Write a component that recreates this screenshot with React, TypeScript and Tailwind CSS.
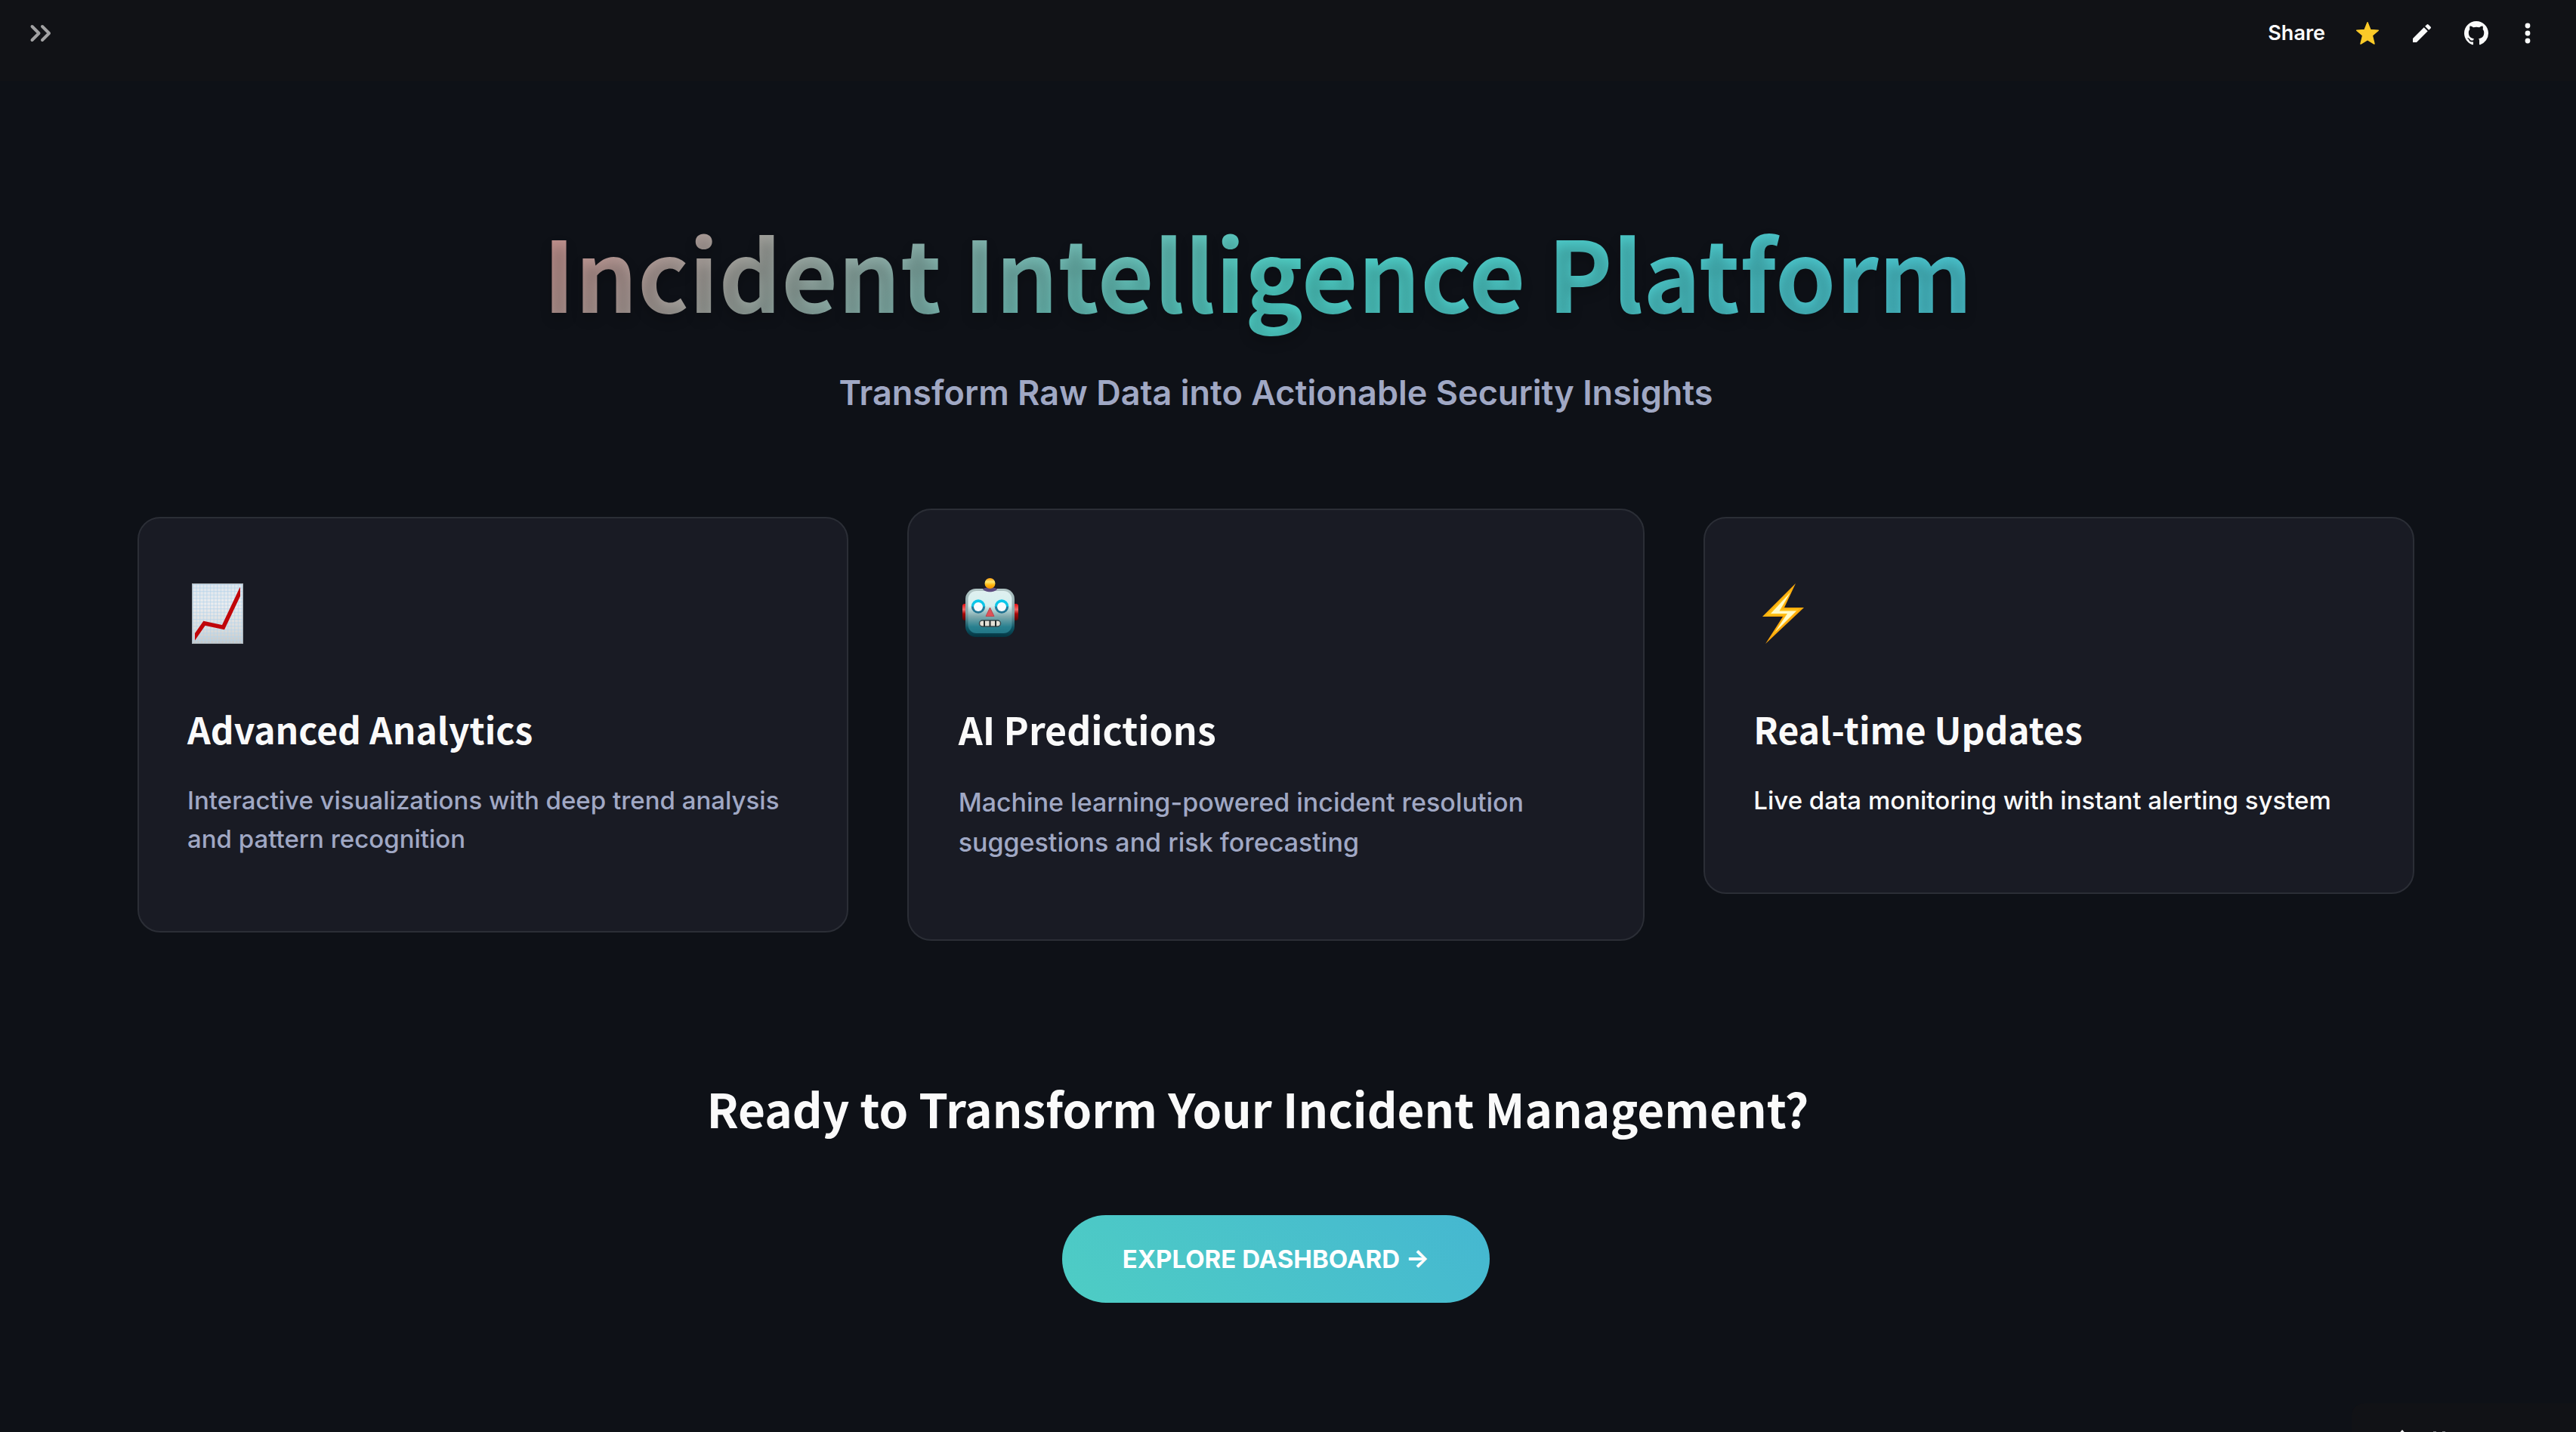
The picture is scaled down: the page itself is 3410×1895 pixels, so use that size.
import React from "react";

const heading = "font-['Noto_Sans_CJK_SC',sans-serif] font-bold text-[#fafafa]";

function ChartIcon() {
  return (
    <svg viewBox="0 0 68 80" className="mt-[22px] ml-[6px] h-20 w-[68px]" aria-hidden="true">
      <defs>
        <linearGradient id="paper" x1="0" y1="0" x2="0" y2="1">
          <stop offset="0" stopColor="#dfe6ec" />
          <stop offset="0.35" stopColor="#ecedef" />
          <stop offset="0.75" stopColor="#dddddb" />
          <stop offset="1" stopColor="#c3c8ca" />
        </linearGradient>
        <pattern id="squares" width="4.6" height="4.6" patternUnits="userSpaceOnUse">
          <path d="M0 1.6H4.6M1.6 0V4.6" stroke="#b5d3ea" strokeWidth="0.8" fill="none" />
        </pattern>
        <clipPath id="plot">
          <rect x="4" y="0" width="60" height="80" />
        </clipPath>
      </defs>
      <rect width="68" height="80" fill="url(#paper)" />
      <rect width="68" height="80" fill="url(#squares)" />
      <rect x="0.5" y="0.5" width="67" height="79" fill="none" stroke="#a9b0b5" strokeWidth="1" />
      <path
        d="M1 75L16.500 52.800L41.500 58.200L66 6.500"
        clipPath="url(#plot)"
        fill="none"
        stroke="#c00509"
        strokeWidth="5.400"
        strokeLinejoin="miter"
      />
    </svg>
  );
}

function RobotIcon() {
  return (
    <svg viewBox="0 0 74 78" className="mt-6 ml-[5px] h-[78px] w-[74px]" aria-hidden="true">
      <defs>
        <linearGradient id="face" x1="0" y1="0" x2="0" y2="1">
          <stop offset="0" stopColor="#dff0f0" />
          <stop offset="0.35" stopColor="#d5efee" />
          <stop offset="0.6" stopColor="#7fa9ad" />
          <stop offset="0.85" stopColor="#28808f" />
          <stop offset="1" stopColor="#227686" />
        </linearGradient>
        <linearGradient id="shell" x1="0" y1="0" x2="0" y2="1">
          <stop offset="0" stopColor="#b3c6c6" />
          <stop offset="0.5" stopColor="#83a3a7" />
          <stop offset="0.8" stopColor="#0e5867" />
          <stop offset="1" stopColor="#043340" />
        </linearGradient>
        <linearGradient id="ear" x1="0" y1="0" x2="0" y2="1">
          <stop offset="0" stopColor="#e80c10" />
          <stop offset="0.35" stopColor="#f06a68" />
          <stop offset="0.6" stopColor="#a80808" />
          <stop offset="1" stopColor="#5a0505" />
        </linearGradient>
        <linearGradient id="bulb" x1="0" y1="0" x2="0" y2="1">
          <stop offset="0" stopColor="#ff9d0a" />
          <stop offset="0.35" stopColor="#ffe873" />
          <stop offset="0.65" stopColor="#ffb60c" />
          <stop offset="1" stopColor="#f08a05" />
        </linearGradient>
        <linearGradient id="eye" x1="0" y1="0" x2="0" y2="1">
          <stop offset="0" stopColor="#05c9ee" />
          <stop offset="0.48" stopColor="#12c4e4" />
          <stop offset="0.55" stopColor="#1f7fa0" />
          <stop offset="1" stopColor="#23708e" />
        </linearGradient>
      </defs>
      <rect x="0" y="34" width="8" height="22" rx="3" fill="url(#ear)" />
      <rect x="66" y="34" width="8" height="22" rx="3" fill="url(#ear)" />
      <rect x="4" y="14" width="65" height="64" rx="14" fill="url(#shell)" />
      <rect x="7.500" y="17" width="58" height="56" rx="11" fill="url(#face)" />
      <path d="M27 14.500C31 11 42 11 46 14.500C43 19.500 30 19.500 27 14.500Z" fill="#5b4a7d" />
      <circle cx="36.500" cy="7" r="7" fill="url(#bulb)" />
      <circle cx="21" cy="37.500" r="9.200" fill="url(#eye)" />
      <circle cx="21" cy="38" r="6" fill="#f8fbfd" />
      <circle cx="52" cy="37.500" r="9.200" fill="url(#eye)" />
      <circle cx="52" cy="38" r="6" fill="#f8fbfd" />
      <path d="M36.500 39L42 50.500H31Z" fill="#dd5258" stroke="#b9474e" strokeWidth="1" strokeLinejoin="round" />
      <rect x="22.500" y="56" width="28" height="8" rx="4" fill="#e3e0d6" stroke="#3a4a4d" strokeWidth="1.500" />
      <path d="M29 56V64M36.500 56V64M44 56V64" stroke="#222b2c" strokeWidth="2" />
    </svg>
  );
}

function BoltIcon() {
  return (
    <svg viewBox="0 0 56 80" className="mt-[22px] ml-[12px] h-20 w-14" aria-hidden="true">
      <defs>
        <linearGradient id="bolt" x1="0" y1="0" x2="1" y2="1">
          <stop offset="0" stopColor="#ffc412" />
          <stop offset="0.5" stopColor="#fca50a" />
          <stop offset="1" stopColor="#ffb20d" />
        </linearGradient>
      </defs>
      <path d="M44 0L0 44H27L4 80L55 32H29Z" fill="url(#bolt)" />
      <path d="M39 8L5 42.500H30L12 70L49 33.500H26Z" fill="#ffcb1c" opacity="0.7" />
      <path d="M37 12L11 40H33L17 64L45 36.500H22.500Z" fill="#fffbc9" />
    </svg>
  );
}

function Toolbar() {
  return (
    <header className="h-[107px] bg-[#111216]">
      <div className="flex h-[88px] items-center justify-between pr-[52px] pl-[38px]">
        <button type="button" aria-label="Open sidebar" className="text-[#a2a2a3]">
          <svg viewBox="0 0 32 32" className="size-8" fill="none" stroke="currentColor" strokeWidth="4" strokeLinecap="round" strokeLinejoin="round">
            <path d="M4.500 7L13.500 16L4.500 25M18 7L27 16L18 25" />
          </svg>
        </button>
        <div className="flex items-center gap-10 text-[#fafafa]">
          <button type="button" className="text-[27px] leading-8 font-semibold">Share</button>
          <button type="button" aria-label="Favorite">
            <svg viewBox="0 0 32 32" className="size-8 text-[#fbca28]" fill="currentColor" stroke="currentColor" strokeWidth="1.500" strokeLinejoin="round">
              <path d="M16 1.800L19.900 11.600L30.300 12.300L22.300 19L25 30L16 24.600L7 30L9.700 19L1.700 12.300L12.100 11.600Z" />
            </svg>
          </button>
          <button type="button" aria-label="Edit">
            <svg viewBox="0 0 24 24" className="size-8" fill="currentColor">
              <path d="M3 17.250V21h3.750L17.810 9.940l-3.750-3.750L3 17.250zM20.710 7.040a1 1 0 000-1.410l-2.340-2.340a1 1 0 00-1.410 0l-1.830 1.830 3.750 3.750 1.830-1.830z" />
            </svg>
          </button>
          <a href="#github" aria-label="View source on GitHub">
            <svg viewBox="0 0 16 16" className="size-8" fill="currentColor">
              <path d="M8 0C3.580 0 0 3.580 0 8c0 3.540 2.290 6.530 5.470 7.590.4.070.55-.17.55-.38 0-.19-.01-.82-.01-1.490-2.010.37-2.530-.49-2.690-.94-.09-.23-.48-.94-.82-1.130-.28-.15-.68-.52-.01-.53.63-.01 1.080.58 1.230.82.72 1.210 1.870.87 2.330.66.070-.52.28-.87.51-1.070-1.780-.2-3.640-.89-3.640-3.950 0-.87.31-1.590.82-2.150-.08-.2-.36-1.020.08-2.120 0 0 .67-.21 2.200.82.64-.18 1.320-.27 2-.27.68 0 1.360.09 2 .27 1.530-1.040 2.200-.82 2.200-.82.44 1.100.16 1.920.08 2.120.51.56.82 1.270.82 2.150 0 3.070-1.870 3.750-3.650 3.950.29.25.54.73.54 1.480 0 1.070-.01 1.930-.01 2.200 0 .21.15.46.55.38A8.013 8.013 0 0016 8c0-4.420-3.580-8-8-8z" />
            </svg>
          </a>
          <button type="button" aria-label="More options">
            <svg viewBox="0 0 24 32" className="h-8 w-6" fill="currentColor">
              <circle cx="12" cy="6" r="3.400" />
              <circle cx="12" cy="16" r="3.400" />
              <circle cx="12" cy="26" r="3.400" />
            </svg>
          </button>
        </div>
      </div>
    </header>
  );
}

type CardProps = { icon: React.ReactNode; title: string; text: string; bright?: boolean };

function Card({ icon, title, text, bright }: CardProps) {
  return (
    <article className="rounded-[30px] border-2 border-[#2b2e36] bg-[#191b24] px-16 pt-16 pb-24">
      <div className="flex h-[124px] items-start">{icon}</div>
      <h3 className={`${heading} mt-[60px] text-[48px] leading-[60px]`}>{title}</h3>
      <p className={`mt-10 text-[33px] leading-[51px] font-medium ${bright ? "text-[#fafafa]" : "text-[#a0a8c4]"}`}>{text}</p>
    </article>
  );
}

/* The highlighted card is a little larger than its neighbours on every side. */
function RaisedCard({ icon, title, text }: CardProps) {
  return (
    <article className="-mx-[18px] -my-[11px] rounded-[32px] border-2 border-[#2b2e36] bg-[#191b24] px-[66px] pt-[66px] pb-[102px]">
      <div className="flex h-32 items-start">{icon}</div>
      <h3 className={`${heading} mt-16 text-[50px] leading-[62px]`}>{title}</h3>
      <p className="mt-10 text-[34px] leading-[53px] font-medium text-[#a0a8c4]">{text}</p>
    </article>
  );
}

export default function App() {
  return (
    <div className="h-screen overflow-hidden bg-[#0e1117] font-['Inter',sans-serif]">
      <Toolbar />
      <main className="pt-[175px] pr-[214px] pl-[182px]">
        <section className="text-center">
          <h1 className="bg-[linear-gradient(135deg,#ff6b6b_0%,#4ecdc4_50%,#45b7d1_100%)] bg-clip-text pr-12 pb-6 font-['Noto_Sans_CJK_SC',sans-serif] text-[129px] leading-[152px] font-bold text-transparent [text-shadow:0_8px_16px_rgba(0,0,0,0.2)]">
            Incident Intelligence Platform
          </h1>
          <p className="mt-[26px] text-[45px] leading-[72px] font-semibold text-[#a0a8c4]">
            Transform Raw Data into Actionable Security Insights
          </p>
        </section>

        <section className="mt-32 grid grid-cols-3 items-start gap-24">
          <Card
            icon={<ChartIcon />}
            title="Advanced Analytics"
            text="Interactive visualizations with deep trend analysis and pattern recognition"
          />
          <RaisedCard
            icon={<RobotIcon />}
            title="AI Predictions"
            text="Machine learning-powered incident resolution suggestions and risk forecasting"
          />
          <Card
            icon={<BoltIcon />}
            title="Real-time Updates"
            text="Live data monitoring with instant alerting system"
            bright
          />
        </section>

        <section className="mt-48 flex flex-col items-center">
          <h2 className={`${heading} pr-12 text-[62px] leading-[80px]`}>
            Ready to Transform Your Incident Management?
          </h2>
          <button
            type="button"
            className="mt-[102px] h-[116px] rounded-full bg-[linear-gradient(45deg,#4ecdc4,#45b7d1)] px-20 text-[33px] leading-[52px] font-bold text-white"
          >
            EXPLORE DASHBOARD →
          </button>
        </section>
      </main>

      <div className="fixed right-0 bottom-0 h-[38px] w-[297px] overflow-hidden rounded-tl-2xl bg-[#111216] pt-[35px] pl-16">
        <svg viewBox="0 0 64 32" className="h-8 w-16" aria-hidden="true">
          <path d="M3 0L10 8H-4Z" fill="#fafafa" />
          <path d="M44 2H48V8H44ZM56 2H60V8H56Z" fill="#77777a" />
        </svg>
      </div>
    </div>
  );
}
